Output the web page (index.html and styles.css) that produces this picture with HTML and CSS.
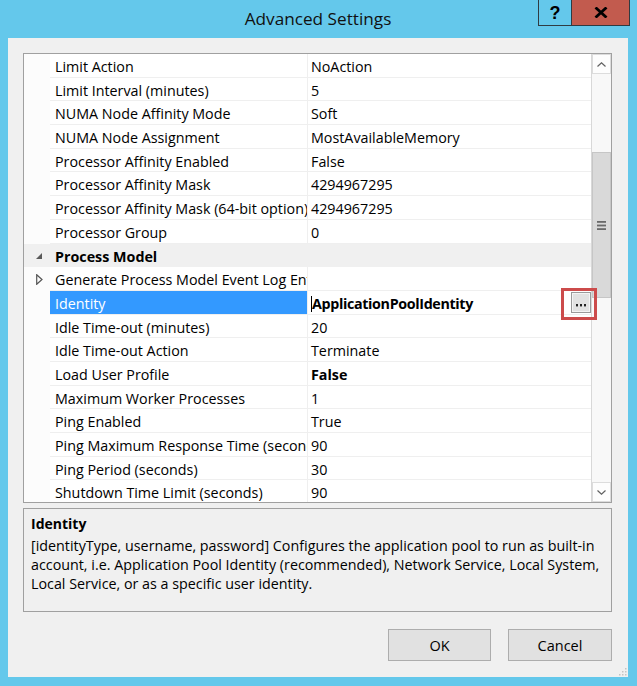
FILE: index.html
```html
<!DOCTYPE html>
<html lang="en">
<head>
<meta charset="utf-8">
<title>Advanced Settings</title>
<link rel="stylesheet" href="styles.css">
</head>
<body>
<div class="window">
  <div class="titlebar">
    <div class="title">Advanced Settings</div>
  </div>
  <div class="caption">
    <div class="cap-help">?</div>
    <div class="cap-close">
      <svg width="14" height="11" viewBox="0 0 14 11"><path d="M1.5 0.5 L12.5 10.5 M12.5 0.5 L1.5 10.5" stroke="#000" stroke-width="2.8" fill="none"/></svg>
    </div>
  </div>

  <div class="client">
    <div class="grid">
      <div class="rows">
        <div class="row"><div class="gut"></div><div class="name">Limit Action</div><div class="val">NoAction</div></div>
        <div class="row"><div class="gut"></div><div class="name">Limit Interval (minutes)</div><div class="val">5</div></div>
        <div class="row"><div class="gut"></div><div class="name">NUMA Node Affinity Mode</div><div class="val">Soft</div></div>
        <div class="row"><div class="gut"></div><div class="name">NUMA Node Assignment</div><div class="val">MostAvailableMemory</div></div>
        <div class="row"><div class="gut"></div><div class="name">Processor Affinity Enabled</div><div class="val">False</div></div>
        <div class="row"><div class="gut"></div><div class="name">Processor Affinity Mask</div><div class="val">4294967295</div></div>
        <div class="row"><div class="gut"></div><div class="name">Processor Affinity Mask (64-bit option)</div><div class="val">4294967295</div></div>
        <div class="row"><div class="gut"></div><div class="name">Processor Group</div><div class="val">0</div></div>
        <div class="row category">
          <div class="gut"><svg width="6" height="6" viewBox="0 0 6 6"><polygon points="6,0 6,6 0,6" fill="#595959"/></svg></div>
          <div class="name">Process Model</div><div class="val"></div>
        </div>
        <div class="row">
          <div class="gut"><svg width="7" height="11" viewBox="0 0 7 11"><polygon points="0.7,0.7 6,5.5 0.7,10.3" fill="none" stroke="#555" stroke-width="1.2"/></svg></div>
          <div class="name">Generate Process Model Event Log Entry</div><div class="val"></div>
        </div>
        <div class="row selected">
          <div class="gut"></div>
          <div class="name">Identity</div>
          <div class="val edit">
            <span class="caret"></span><b>ApplicationPoolIdentity</b>
            <span class="ellipsis"><svg width="10" height="3" viewBox="0 0 10 3"><rect x="0" y="0" width="2" height="2.4" fill="#222"/><rect x="4" y="0" width="2" height="2.4" fill="#222"/><rect x="8" y="0" width="2" height="2.4" fill="#222"/></svg></span>
          </div>
        </div>
        <div class="row"><div class="gut"></div><div class="name">Idle Time-out (minutes)</div><div class="val">20</div></div>
        <div class="row"><div class="gut"></div><div class="name">Idle Time-out Action</div><div class="val">Terminate</div></div>
        <div class="row"><div class="gut"></div><div class="name">Load User Profile</div><div class="val"><b>False</b></div></div>
        <div class="row"><div class="gut"></div><div class="name">Maximum Worker Processes</div><div class="val">1</div></div>
        <div class="row"><div class="gut"></div><div class="name">Ping Enabled</div><div class="val">True</div></div>
        <div class="row"><div class="gut"></div><div class="name">Ping Maximum Response Time (seconds)</div><div class="val">90</div></div>
        <div class="row"><div class="gut"></div><div class="name">Ping Period (seconds)</div><div class="val">30</div></div>
        <div class="row"><div class="gut"></div><div class="name">Shutdown Time Limit (seconds)</div><div class="val">90</div></div>
      </div>
      <div class="scrollbar">
        <div class="sb-btn"><svg width="9" height="5" viewBox="0 0 9 5"><polyline points="0.5,4.5 4.5,0.8 8.5,4.5" fill="none" stroke="#606060" stroke-width="1.2"/></svg></div>
        <div class="sb-track">
          <div class="sb-thumb">
            <svg width="9" height="9" viewBox="0 0 9 9"><rect y="0" width="9" height="1.8" fill="#6a6a6a"/><rect y="3.6" width="9" height="1.8" fill="#6a6a6a"/><rect y="7.2" width="9" height="1.8" fill="#6a6a6a"/></svg>
          </div>
        </div>
        <div class="sb-btn"><svg width="9" height="5" viewBox="0 0 9 5"><polyline points="0.5,0.5 4.5,4.2 8.5,0.5" fill="none" stroke="#606060" stroke-width="1.2"/></svg></div>
      </div>
      <div class="callout"></div>
    </div>

    <div class="desc">
      <div class="desc-title">Identity</div>
      <div class="desc-text">[identityType, username, password] Configures the application pool to run as built-in account, i.e. Application Pool Identity (recommended), Network Service, Local System, Local Service, or as a specific user identity.</div>
    </div>

    <div class="actions">
      <div class="btn">OK</div>
      <div class="btn">Cancel</div>
    </div>

    <svg class="grip" width="9" height="9" viewBox="0 0 9 9">
      <rect x="7" y="1" width="1.5" height="1.5" fill="#c4c4c4"/>
      <rect x="4" y="4" width="1.5" height="1.5" fill="#c4c4c4"/>
      <rect x="7" y="4" width="1.5" height="1.5" fill="#c4c4c4"/>
      <rect x="1" y="7" width="1.5" height="1.5" fill="#c4c4c4"/>
      <rect x="4" y="7" width="1.5" height="1.5" fill="#c4c4c4"/>
      <rect x="7" y="7" width="1.5" height="1.5" fill="#c4c4c4"/>
    </svg>
  </div>
</div>
</body>
</html>
```
FILE: styles.css
```css
* { box-sizing: border-box; }

html, body {
  margin: 0;
  padding: 0;
}

body {
  width: 637px;
  height: 686px;
  overflow: hidden;
  background: #64c8eb;
  font-family: "Open Sans", "Noto Sans", sans-serif;
  color: #000;
}

/* Window frame */
.window {
  position: relative;
  height: 686px;
  display: flex;
  flex-direction: column;
  padding: 0 9px 9px 8px;
}

.titlebar {
  flex: none;
  height: 38px;
}

.title {
  text-align: center;
  font-size: 17.2px;
  line-height: 38px;
  color: #111;
}

/* Help / close caption buttons */
.caption {
  position: absolute;
  top: 0;
  right: 7px;
  display: flex;
  height: 26px;
  border: 1px solid #2f3b42;
  border-top: none;
}

.cap-help {
  width: 33px;
  border-right: 1px solid #2f3b42;
  display: flex;
  align-items: center;
  justify-content: center;
  font-family: "Liberation Sans", Arial, sans-serif;
  font-weight: bold;
  font-size: 18px;
  line-height: 1;
  padding-top: 1px;
}

.cap-close {
  width: 57px;
  background: #c25b4e;
  display: flex;
  align-items: center;
  justify-content: center;
}

/* Client area */
.client {
  position: relative;
  flex: 1;
  background: #f0f0f0;
  padding: 15px 16px 0 15px;
  display: flex;
  flex-direction: column;
}

/* Property grid */
.grid {
  position: relative;
  height: 450px;
  flex: none;
  display: flex;
  border: 1px solid #a0a0a0;
  background: #fff;
}

.rows {
  flex: 1;
  overflow: hidden;
  font-size: 14.3px;
}

.row {
  display: grid;
  grid-template-columns: 26px 258px 1fr;
  height: 23.7px;
}

.gut {
  background: #fcfcfc;
  display: flex;
  align-items: center;
  justify-content: center;
  padding-left: 4px;
}

.name,
.val {
  border-bottom: 1px solid #efefef;
  padding-top: 3px;
  line-height: 19.7px;
  white-space: nowrap;
  overflow: hidden;
}

.name {
  padding-left: 5px;
  border-right: 1px solid #efefef;
}

.val {
  padding-left: 3px;
}

.category .gut,
.category .name,
.category .val {
  background: #f0f0f0;
  border-color: #f0f0f0;
}

.category .name {
  font-weight: bold;
}

.category .gut svg {
  margin-top: 2px;
}

.selected .name {
  background: #3399ff;
  color: #fff;
}

.val b {
  font-weight: bold;
}

.edit {
  display: flex;
  align-items: center;
  padding-top: 0;
}

.caret {
  width: 1px;
  height: 16px;
  background: #000;
  margin-top: 3px;
}

.edit b {
  flex: 1;
  letter-spacing: -0.35px;
  padding-top: 3px;
}

.ellipsis {
  width: 20px;
  height: 21px;
  border: 1px solid #9a9a9a;
  box-shadow: inset 0 0 0 1px #f4f4f4;
  background: #e2e2e2;
  display: flex;
  align-items: flex-end;
  justify-content: center;
  padding-bottom: 5px;
}

/* Vertical scrollbar */
.scrollbar {
  width: 20px;
  display: flex;
  flex-direction: column;
  background: #f8f8f8;
  border-left: 1px solid #d8d8d8;
}

.sb-btn {
  height: 20px;
  flex: none;
  border: 1px solid #dcdcdc;
  background: #fdfdfd;
  display: flex;
  align-items: center;
  justify-content: center;
}

.sb-track {
  flex: 1;
  display: flex;
  flex-direction: column;
}

.sb-thumb {
  margin-top: 78px;
  height: 146px;
  background: #d9d9d9;
  border: 1px solid #c6c6c6;
  display: flex;
  align-items: center;
  justify-content: center;
}

/* Red highlight drawn around the browse button */
.callout {
  position: absolute;
  left: 537px;
  top: 234px;
  width: 36px;
  height: 32px;
  border: 3px solid #cc4b4b;
}

/* Description panel */
.desc {
  flex: none;
  margin-top: 5px;
  height: 104px;
  border: 1px solid #a0a0a0;
  background: #f0f0f0;
  padding: 5px 2px 0 7px;
  font-size: 14.3px;
}

.desc-title {
  font-weight: bold;
  font-size: 14px;
  line-height: 19px;
  margin-bottom: 3px;
}

.desc-text {
  line-height: 19px;
}

/* Dialog buttons */
.actions {
  flex: none;
  margin-top: 17px;
  display: flex;
  justify-content: flex-end;
  gap: 17px;
}

.btn {
  height: 32px;
  border: 1px solid #adadad;
  background: #e1e1e1;
  font-size: 14.5px;
  display: flex;
  align-items: center;
  justify-content: center;
}

.btn:first-child { width: 103px; }
.btn:last-child { width: 104px; }

.grip {
  position: absolute;
  right: 1px;
  bottom: 1px;
}
```
